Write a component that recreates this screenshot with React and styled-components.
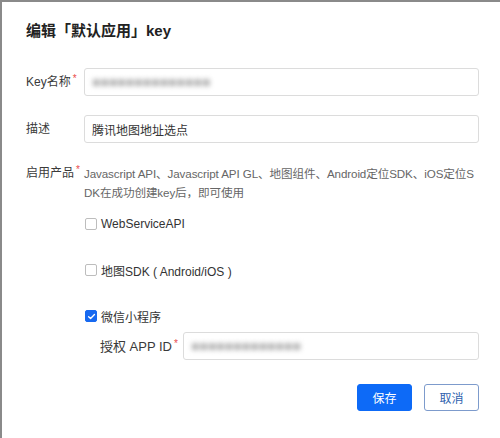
import React from 'react'
import styled, { createGlobalStyle } from 'styled-components'

const Global = createGlobalStyle`
  body {
    margin: 0;
    background: #fff;
    font-family: "Liberation Sans", "Noto Sans CJK SC", sans-serif;
  }
`;

const Dialog = styled.div`
  box-sizing: border-box;
  width: 500px;
  height: 438px;
  border-top: 2px solid #8a8a8a;
  border-left: 2px solid #8a8a8a;
  padding: 19px 21px 0 24px;
  background: #fff;
  color: #333;
`;

const Title = styled.h2`
  margin: 0 0 27px;
  font-size: 15px;
  line-height: 20px;
  font-weight: bold;
  color: #222;
`;

const Row = styled.div`
  display: grid;
  grid-template-columns: 58px 1fr;
  align-items: ${p => (p.top ? 'start' : 'center')};
  margin-bottom: ${p => p.gap || 0}px;
`;

const Label = styled.label`
  font-size: 12px;
  line-height: 19px;
  color: #3a3a3a;
  white-space: nowrap;
`;

const Star = styled.sup`
  color: #e94b4b;
  font-size: 10px;
  margin-left: 2px;
  vertical-align: 4px;
  line-height: 0;
`;

const Input = styled.div`
  box-sizing: border-box;
  height: 28px;
  border: 1px solid #dcdcdc;
  border-radius: 3px;
  padding: 0 7px;
  display: flex;
  align-items: center;
  font-size: 12px;
  color: #333;
  background: #fff;
`;

const Blurred = styled.span`
  color: #b3b3b3;
  font-size: 14px;
  filter: blur(2.5px);
`;

const Hint = styled.div`
  font-size: 11.6px;
  line-height: 19px;
  color: #666;
  white-space: nowrap;
  letter-spacing: -0.1px;
`;

const Checks = styled.div`
  display: flex;
  flex-direction: column;
  gap: 26px;
  padding-left: 58px;
  margin-top: 12px;
`;

const CheckRow = styled.div`
  display: flex;
  align-items: center;
  gap: 4px;
  height: 20px;
  font-size: 12px;
  color: #333;
`;

const Box = styled.span`
  box-sizing: border-box;
  width: 12px;
  height: 12px;
  border-radius: 2px;
  border: 1px solid ${p => (p.checked ? '#1769f0' : '#bdbdbd')};
  background: ${p => (p.checked ? '#1769f0' : '#fff')};
  display: inline-flex;
  align-items: center;
  justify-content: center;
  margin-left: 1px;
`;

const SubRow = styled.div`
  display: flex;
  align-items: center;
  margin: 6px 0 0 74px;
`;

const SubLabel = styled(Label)`
  width: 83px;
  font-size: 13px;
`;

const Grow = styled(Input)`
  flex: 1;
`;

const Footer = styled.div`
  display: flex;
  justify-content: flex-end;
  gap: 12px;
  margin-top: 24px;
`;

const Button = styled.button`
  box-sizing: border-box;
  width: 55px;
  height: 27px;
  border-radius: 3px;
  font-family: inherit;
  font-size: 12px;
  cursor: pointer;
  border: 1px solid ${p => (p.primary ? '#0d6af7' : '#7d9bcc')};
  background: ${p => (p.primary ? '#0d6af7' : '#fff')};
  color: ${p => (p.primary ? '#fff' : '#2f5fae')};
`;

const Check = () => (
  <svg width="9" height="9" viewBox="0 0 10 10">
    <path d="M1.8 5.2 L4 7.3 L8.3 2.8" fill="none" stroke="#fff" strokeWidth="1.5" strokeLinecap="round" strokeLinejoin="round" />
  </svg>
);

const options = [
  { name: 'WebServiceAPI', checked: false },
  { name: '地图SDK ( Android/iOS )', checked: false },
  { name: '微信小程序', checked: true },
];

export default function App() {
  return (
    <>
      <Global />
      <Dialog>
        <Title>编辑「默认应用」key</Title>
        <Row gap={19}>
          <Label>Key名称<Star>*</Star></Label>
          <Input><Blurred>■■■■■■■■■■■■■■</Blurred></Input>
        </Row>
        <Row gap={21}>
          <Label>描述</Label>
          <Input>腾讯地图地址选点</Input>
        </Row>
        <Row top>
          <Label>启用产品<Star>*</Star></Label>
          <Hint>
            Javascript API、Javascript API GL、地图组件、Android定位SDK、iOS定位S
            <br />
            DK在成功创建key后，即可使用
          </Hint>
        </Row>
        <Checks>
          {options.map(o => (
            <CheckRow key={o.name}>
              <Box checked={o.checked}>{o.checked && <Check />}</Box>
              {o.name}
            </CheckRow>
          ))}
        </Checks>
        <SubRow>
          <SubLabel>授权 APP ID<Star>*</Star></SubLabel>
          <Grow><Blurred>■■■■■■■■■■■■■</Blurred></Grow>
        </SubRow>
        <Footer>
          <Button primary>保存</Button>
          <Button>取消</Button>
        </Footer>
      </Dialog>
    </>
  );
}
